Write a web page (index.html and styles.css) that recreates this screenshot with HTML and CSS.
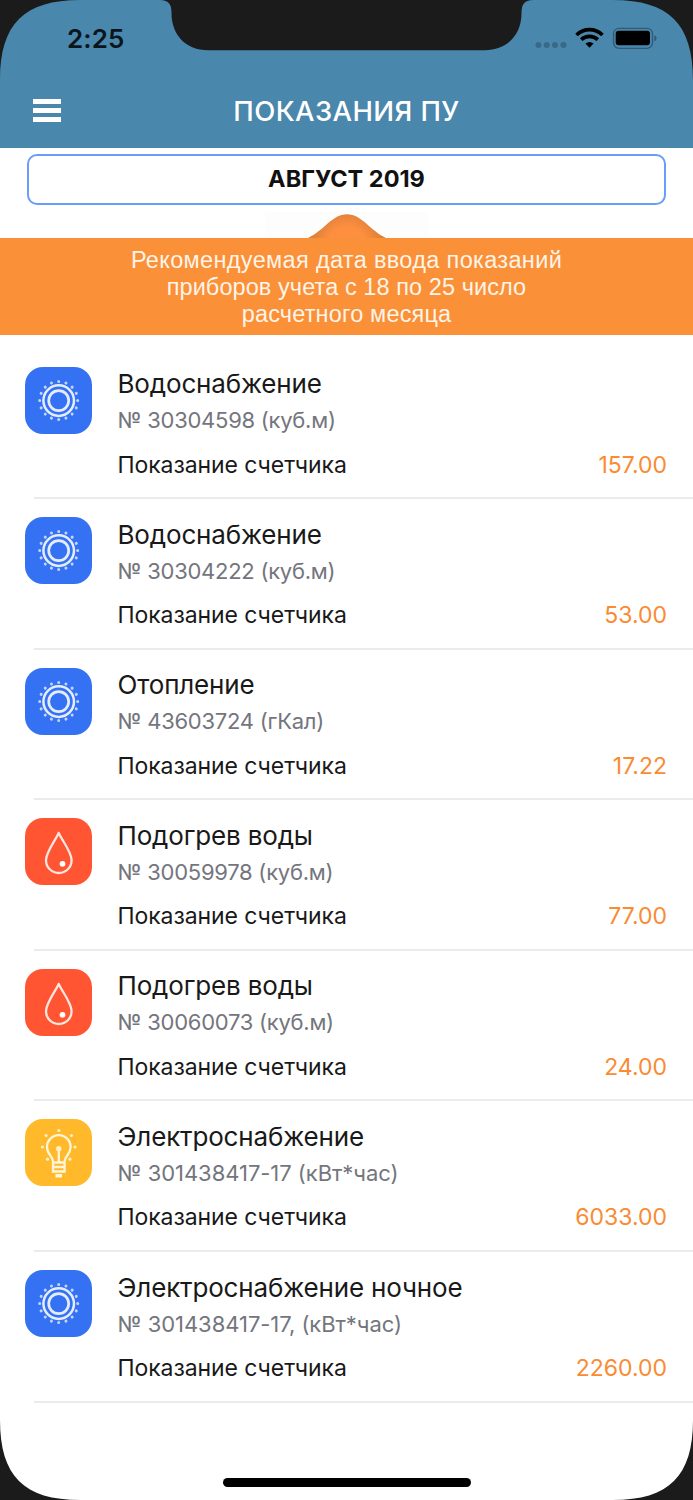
FILE: index.html
```
<!DOCTYPE html>
<html lang="ru">
<head>
<meta charset="utf-8">
<title>Показания ПУ</title>
<link rel="stylesheet" href="styles.css">
</head>
<body>
<svg class="defs" width="0" height="0" aria-hidden="true">
  <symbol id="sun" viewBox="0 0 67 67">
    <g fill="none" stroke="#e4edff"><circle cx="33.7" cy="33.6" r="15.3" stroke-width="2.5"/><circle cx="33.7" cy="33.6" r="10" stroke-width="2.7"/><circle cx="33.7" cy="33.6" r="19" stroke="#c3d5ff" stroke-width="3" stroke-linecap="round" pathLength="160" stroke-dasharray="0.01 9.99"/></g>
  </symbol>
  <symbol id="drop" viewBox="0 0 67 67">
    <path d="M33.7 14.9C30 23 21 34 21 42.2a12.8 12.8 0 0 0 25.6 0C46.600 34 37.400 23 33.700 14.900Z" fill="none" stroke="#ffe6df" stroke-width="2.3" stroke-linejoin="round"/><circle cx="37.500" cy="45.800" r="2.900" fill="#fff"/>
  </symbol>
  <symbol id="bulb" viewBox="0 0 67 67">
    <g fill="none" stroke="#fff6da" stroke-width="2.3">
      <path d="M28 52.500V42.500C28 37 22 35.500 22 28a11.800 11.800 0 0 1 23.600 0C45.600 35.500 39.600 37 39.600 42.500V52.500Z"/>
      <path d="M28 43.500H39.600M28 48H39.600M33.800 30V43" />
      <path d="M30.500 56.800H37" stroke-width="3.500"/>
    </g>
    <g fill="#fff1c4"><circle cx="33.800" cy="29.800" r="2.700"/><circle cx="33.800" cy="11.500" r="1.600"/><circle cx="21" cy="16.500" r="1.600"/><circle cx="46.500" cy="16.500" r="1.600"/><circle cx="17.500" cy="28" r="1.600"/><circle cx="50" cy="28" r="1.600"/><circle cx="22.500" cy="40.200" r="1.600"/><circle cx="45" cy="40.200" r="1.600"/></g>
  </symbol>
</svg>
<div class="screen">
  <header class="top">
    <div class="status">
      <span class="time">2:25</span>
      <svg class="signals" width="124" height="24" viewBox="0 0 124 24">
        <g fill="#3a6987"><circle cx="5.500" cy="18" r="3"/><circle cx="13.700" cy="18" r="3"/><circle cx="22" cy="18" r="3"/><circle cx="30.500" cy="18" r="3"/></g>
        <g fill="none" stroke="#000" stroke-width="3.600"><path d="M43.500 8C51 .8 62 .8 69.500 8"/><path d="M48.200 12.700C53 8.300 60 8.300 64.800 12.700"/></g>
        <path d="M56.500 20.700L52.400 16.600Q56.500 13.200 60.600 16.600Z"/>
        <rect x="80.500" y="1.300" width="39" height="20" rx="5.500" fill="none" stroke="#315b75" stroke-width="1.300"/>
        <rect x="82.700" y="3.800" width="34.300" height="14.400" rx="3"/>
        <path d="M121.300 8.200Q123.600 9 123.600 11.300T121.300 14.500Z" fill="#315b75"/>
      </svg>
    </div>
    <div class="nav">
      <div class="menu"><i></i><i></i><i></i></div>
      <h1 class="heading">ПОКАЗАНИЯ ПУ</h1>
    </div>
  </header>
  <div class="month">АВГУСТ 2019</div>
  <svg class="hump" viewBox="0 0 164 26" width="164" height="26">
    <defs><radialGradient id="shade" gradientUnits="userSpaceOnUse" cx="82" cy="34" r="34"><stop offset=".55" stop-color="#ff8f40"/><stop offset="1" stop-color="#df8138"/></radialGradient></defs>
    <path d="M0 0H164V26H0Z" fill="#fdfdfd"/>
    <path d="M43 26C60 18 67 2.300 82 2.300S104 18 121 26Z" fill="url(#shade)"/>
  </svg>
  <div class="notice"><span>Рекомендуемая дата ввода показаний</span><span class="mid">приборов учета с 18 по 25 число</span><span class="end">расчетного месяца</span></div>
  <main class="list">
    <section class="row"><svg class="icon blue"><use href="#sun"/></svg><div class="info"><h2 class="title">Водоснабжение</h2><p class="number">№ 30304598 (куб.м)</p><div class="reading"><span class="label">Показание счетчика</span><span class="value">157.00</span></div></div></section>
    <section class="row"><svg class="icon blue"><use href="#sun"/></svg><div class="info"><h2 class="title">Водоснабжение</h2><p class="number">№ 30304222 (куб.м)</p><div class="reading"><span class="label">Показание счетчика</span><span class="value">53.00</span></div></div></section>
    <section class="row"><svg class="icon blue"><use href="#sun"/></svg><div class="info"><h2 class="title">Отопление</h2><p class="number">№ 43603724 (гКал)</p><div class="reading"><span class="label">Показание счетчика</span><span class="value">17.22</span></div></div></section>
    <section class="row"><svg class="icon red"><use href="#drop"/></svg><div class="info"><h2 class="title">Подогрев воды</h2><p class="number">№ 30059978 (куб.м)</p><div class="reading"><span class="label">Показание счетчика</span><span class="value">77.00</span></div></div></section>
    <section class="row"><svg class="icon red"><use href="#drop"/></svg><div class="info"><h2 class="title">Подогрев воды</h2><p class="number">№ 30060073 (куб.м)</p><div class="reading"><span class="label">Показание счетчика</span><span class="value">24.00</span></div></div></section>
    <section class="row"><svg class="icon yellow"><use href="#bulb"/></svg><div class="info"><h2 class="title">Электроснабжение</h2><p class="number tail">№ 301438417-17 (кВт*час)</p><div class="reading"><span class="label">Показание счетчика</span><span class="value">6033.00</span></div></div></section>
    <section class="row"><svg class="icon blue"><use href="#sun"/></svg><div class="info"><h2 class="title">Электроснабжение ночное</h2><p class="number tail">№ 301438417-17, (кВт*час)</p><div class="reading"><span class="label">Показание счетчика</span><span class="value">2260.00</span></div></div></section>
  </main>
  <div class="home"></div>
  <svg class="bezel" viewBox="0 0 693 1500" width="693" height="1500" fill="#1b1b1b">
    <path d="M0 0H80C24 0 0 24 0 80Z"/>
    <path d="M693 0V80C693 24 669 0 613 0Z"/>
    <path d="M0 1500V1420C0 1476 24 1500 80 1500Z"/>
    <path d="M693 1500H613C669 1500 693 1476 693 1420Z"/>
    <path d="M160 0C169 0 171.500 5 171.500 13C171.500 35 186 50.300 208 50.300H485C507 50.300 521.500 35 521.500 13C521.500 5 524 0 533 0Z"/>
  </svg>
</div>
</body>
</html>
```
FILE: styles.css
```
* { box-sizing: border-box; margin: 0; }
body { background: #fff; font-family: Inter, "Noto Sans", sans-serif; color: #191919; }
.defs { position: absolute; }
.screen { position: relative; width: 693px; height: 1500px; overflow: hidden; display: flex; flex-direction: column; background: #fff; }
.top { height: 147.500px; flex: none; background: #4987ac; padding: 0 33px; display: flex; flex-direction: column; }
.status { height: 74px; display: flex; justify-content: space-between; align-items: flex-start; padding: 24px 3px 0 34px; }
.time { font-size: 26px; line-height: 30px; font-weight: 600; color: #0b151b; letter-spacing: .1px; }
.signals { margin-top: 3px; }
.nav { height: 73px; display: grid; grid-template-columns: 28px 1fr 28px; align-items: center; }
.menu { display: grid; gap: 4px; }
.menu i { height: 5px; background: #fff; }
.heading { text-align: center; color: #fff; font-size: 27.500px; font-weight: 500; line-height: 32px; letter-spacing: .4px; white-space: nowrap; }
.month { flex: none; height: 51px; margin: 6.500px 27px 0; border: 2px solid #6a9cf9; border-radius: 10px; font-size: 23.500px; font-weight: 700; line-height: 46px; text-align: center; color: #111; }
.hump { flex: none; margin: 7px auto 0; height: 26px; display: block; }
.notice { flex: none; height: 97px; background: #fa9037; color: #fff4e8; padding-top: 9px; font: 23.500px/27px "Liberation Sans", Arial, sans-serif; letter-spacing: .34px; display: flex; flex-direction: column; align-items: center; white-space: nowrap; }
.mid { letter-spacing: .08px; }
.end { letter-spacing: .16px; }
.list { padding-top: 13.500px; flex: none; }
.row { height: 150.600px; display: grid; grid-template-columns: 67px 1fr; column-gap: 25.500px; padding: 18.500px 26px 0 25px; background: linear-gradient(#ebebed, #ebebed) 34px 100% / 100% 2px no-repeat; }
.icon { width: 67px; height: 67px; border-radius: 18px; display: block; margin-top: -.500px; }
.blue { background: #3571f3; }
.red { background: #ff5533; }
.yellow { background: #ffb92a; }
.title { font-size: 26px; font-weight: 420; line-height: 34px; letter-spacing: -.16px; white-space: nowrap; }
.number { font-size: 22px; line-height: 30px; margin-top: 4px; color: #74757d; letter-spacing: -.26px; white-space: nowrap; }
.tail { letter-spacing: -.04px; }
.reading { display: flex; justify-content: space-between; font-size: 23px; line-height: 30px; margin-top: 14.500px; }
.label { font-weight: 420; letter-spacing: -.08px; }
.value { color: #fa8b33; }
.home { flex: none; width: 248px; height: 9px; border-radius: 5px; background: #000; margin: 75px auto 0; }
.bezel { position: absolute; inset: 0; }
```
